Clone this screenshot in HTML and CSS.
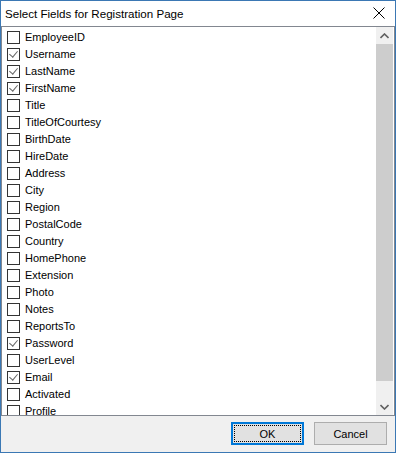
FILE: index.html
```html
<!DOCTYPE html>
<html lang="en">
<head>
    <meta charset="UTF-8">
    <title>Select Fields for Registration Page</title>
    <link rel="stylesheet" href="styles.css">
</head>
<body>

    <div class="window">
        <div class="titlebar">
            <span class="title">Select Fields for Registration Page</span>
            <svg class="close" width="12" height="12" viewBox="0 0 12 12">
                <path d="M0.5 0.5 L11.5 11.5 M11.5 0.5 L0.5 11.5" stroke="#000" stroke-width="1" fill="none"/>
            </svg>
        </div>

        <div class="listbox">
            <div class="items">
                <div class="item"><span class="box"></span>EmployeeID</div>
                <div class="item"><span class="box checked"></span>Username</div>
                <div class="item"><span class="box checked"></span>LastName</div>
                <div class="item"><span class="box checked"></span>FirstName</div>
                <div class="item"><span class="box"></span>Title</div>
                <div class="item"><span class="box"></span>TitleOfCourtesy</div>
                <div class="item"><span class="box"></span>BirthDate</div>
                <div class="item"><span class="box"></span>HireDate</div>
                <div class="item"><span class="box"></span>Address</div>
                <div class="item"><span class="box"></span>City</div>
                <div class="item"><span class="box"></span>Region</div>
                <div class="item"><span class="box"></span>PostalCode</div>
                <div class="item"><span class="box"></span>Country</div>
                <div class="item"><span class="box"></span>HomePhone</div>
                <div class="item"><span class="box"></span>Extension</div>
                <div class="item"><span class="box"></span>Photo</div>
                <div class="item"><span class="box"></span>Notes</div>
                <div class="item"><span class="box"></span>ReportsTo</div>
                <div class="item"><span class="box checked"></span>Password</div>
                <div class="item"><span class="box"></span>UserLevel</div>
                <div class="item"><span class="box checked"></span>Email</div>
                <div class="item"><span class="box"></span>Activated</div>
                <div class="item"><span class="box"></span>Profile</div>
            </div>
            <div class="scrollbar">
                <div class="arrow">
                    <svg width="9" height="6" viewBox="0 0 9 6"><path d="M0.5 5 L4.5 1 L8.5 5" stroke="#606060" stroke-width="1.6" fill="none"/></svg>
                </div>
                <div class="thumb"></div>
                <div class="track"></div>
                <div class="arrow">
                    <svg width="9" height="6" viewBox="0 0 9 6"><path d="M0.5 1 L4.5 5 L8.5 1" stroke="#606060" stroke-width="1.6" fill="none"/></svg>
                </div>
            </div>
        </div>

        <div class="footer">
            <button class="btn default"><span class="focus">OK</span></button>
            <button class="btn">Cancel</button>
        </div>
    </div>

</body>
</html>
```

FILE: styles.css
```css
/* Dialog window */
body {
    margin: 0;
    padding: 0;
    background-color: #fff;
    font-family: "Liberation Sans", Arial, sans-serif;
}

.window {
    width: 396px;
    height: 453px;
    border: 1px solid #3b78b4;
    box-sizing: border-box;
    display: flex;
    flex-direction: column;
    background-color: #f0f0f0;
}

.titlebar {
    height: 25px;
    background-color: #fff;
    display: flex;
    align-items: center;
    justify-content: space-between;
    padding: 0 10px 1px 4px;
    box-sizing: border-box;
    font-size: 11.6px;
    color: #000;
}

.close {
    display: block;
}

/* Checked list */
.listbox {
    height: 390px;
    border: 1px solid #828790;
    box-sizing: border-box;
    background-color: #fff;
    display: flex;
}

.items {
    flex: 1;
    overflow: hidden;
    padding-top: 2px;
}

.item {
    height: 17px;
    display: flex;
    align-items: center;
    padding-left: 5px;
    font-size: 11px;
    line-height: 13px;
    color: #000;
}

.box {
    width: 13px;
    height: 13px;
    border: 1px solid #333;
    box-sizing: border-box;
    margin-right: 5px;
    position: relative;
    background-color: #fff;
}

.box.checked::after {
    content: "";
    position: absolute;
    left: 3px;
    top: 0px;
    width: 4px;
    height: 7px;
    border-right: 1.2px solid #666;
    border-bottom: 1.2px solid #666;
    transform: rotate(40deg);
}

/* Scrollbar */
.scrollbar {
    width: 17px;
    display: flex;
    flex-direction: column;
    background-color: #f0f0f0;
    margin-right: 1px;
}

.arrow {
    height: 17px;
    display: flex;
    align-items: center;
    justify-content: center;
}

.thumb {
    height: 337px;
    background-color: #cdcdcd;
}

.track {
    flex: 1;
}

/* Buttons */
.footer {
    flex: 1;
    display: flex;
    justify-content: flex-end;
    align-items: flex-start;
    gap: 10px;
    padding: 6px 8px 0 0;
}

.btn {
    width: 73px;
    height: 23px;
    border: 1px solid #adadad;
    background-color: #e1e1e1;
    font-family: "Liberation Sans", Arial, sans-serif;
    font-size: 11px;
    color: #000;
    padding: 0;
    box-sizing: border-box;
}

.btn.default {
    border: 2px solid #0078d7;
    display: flex;
    padding: 1px;
}

.focus {
    flex: 1;
    border: 1px dotted #000;
    display: flex;
    align-items: center;
    justify-content: center;
}
```
